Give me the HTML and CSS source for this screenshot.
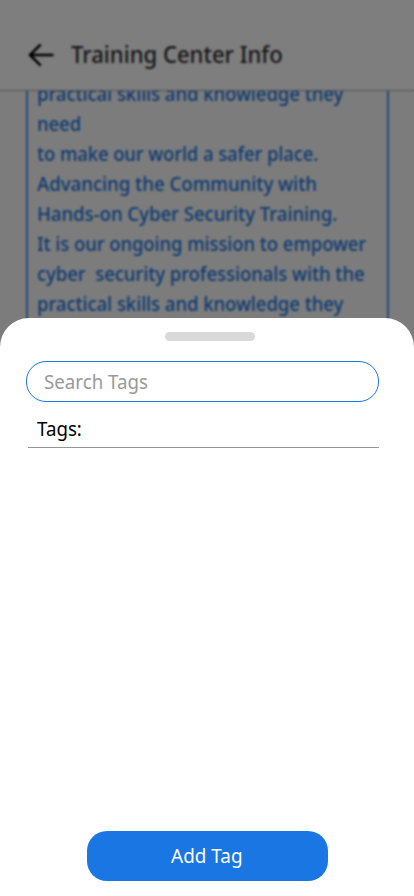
FILE: index.html
```html
<!DOCTYPE html>
<html lang="en">
<head>
<meta charset="utf-8">
<meta name="viewport" content="width=device-width">
<title>Training Center Info</title>
<link rel="stylesheet" href="styles.css">
</head>
<body>
<div class="screen">
  <div class="page">
    <header class="header">
      <svg class="back" viewBox="0 0 26 24" width="26" height="24"><path d="M24.500 12H2M12 2.200L2 12l10 9.800" fill="none" stroke="#000" stroke-width="2.500" stroke-linecap="round" stroke-linejoin="round"/></svg>
      <h1><span class="fit title">Training Center Info</span></h1>
    </header>
    <main class="content">
      <div class="info">
        <p><span class="fit l1">practical skills and knowledge they</span></p>
        <p><span class="fit l2">need</span></p>
        <p><span class="fit l3">to make our world a safer place.</span></p>
        <p><span class="fit l4">Advancing the Community with</span></p>
        <p><span class="fit l5">Hands-on Cyber Security Training.</span></p>
        <p><span class="fit l6">It is our ongoing mission to empower</span></p>
        <p><span class="fit l7">cyber&nbsp; security professionals with the</span></p>
        <p><span class="fit l1">practical skills and knowledge they</span></p>
      </div>
    </main>
  </div>
  <div class="scrim"></div>
  <section class="sheet">
    <div class="handle"></div>
    <div class="search"><span class="fit placeholder">Search Tags</span></div>
    <div class="tags"><span class="fit label">Tags:</span></div>
    <button class="add"><span class="fit action">Add Tag</span></button>
  </section>
</div>
</body>
</html>
```
FILE: styles.css
```css
* { box-sizing: border-box; }
body { margin: 0; font: 20px/30px "Noto Sans", sans-serif; background: #fff; }
.screen { position: relative; width: 414px; height: 896px; overflow: hidden; }
.page { height: 360px; overflow: hidden; background: #f9f9f9; display: flex; flex-direction: column; }
.header { height: 91px; flex: none; display: flex; align-items: flex-start; padding: 39px 28px 0; border-bottom: 1px solid #aaa; background: #fcfcfc; }
.back { margin-top: 4px; }
h1 { margin: 0 0 0 17px; font-size: 23.500px; line-height: 30px; font-weight: 500; color: #303030; }
.fit { display: inline-block; white-space: nowrap; transform-origin: left center; }
.title { transform: scaleX(.94); }
.l1 { transform: scaleX(.922); }
.l2 { transform: scaleX(.92); }
.l3 { transform: scaleX(.914); }
.l4 { transform: scaleX(.931); }
.l5 { transform: scaleX(.927); }
.l6 { transform: scaleX(.918); }
.l7 { transform: scaleX(.922); }
.placeholder, .label { transform: scaleX(.935); }
.action { transform: scaleX(.945); transform-origin: center; }
.content { flex: 1; overflow: hidden; padding: 0 25px 0 26px; }
.info { margin-top: -12px; height: 300px; border: solid #4a92ec; border-width: 0 2px; padding-left: 9px; color: #1976e2; font-weight: 500; }
.info p { margin: 0; height: 30px; }
.scrim { position: absolute; inset: 0; background: rgba(0, 0, 0, .5); backdrop-filter: blur(1px); }
.sheet { position: absolute; left: 0; right: 0; top: 318px; bottom: 0; background: #fff; border-radius: 29px 29px 0 0; padding: 14px 35px 15px 26px; display: flex; flex-direction: column; }
.handle { width: 90px; height: 9px; margin-left: 139px; border-radius: 5px; background: #d9d9d9; flex: none; }
.search { height: 41px; margin-top: 20px; border: 1px solid #1976e2; border-radius: 20px; padding: 5px 17px; color: #999; }
.tags { margin: 11px 0 0 2px; height: 35px; border-bottom: 1px solid #979797; padding: 1px 0 0 9px; color: #000; }
.add { margin: auto 0 0 61px; width: 241px; height: 50px; border: 0; border-radius: 20px; background: #1976e2; color: #fff; font: inherit; padding: 0 2px 1px 0; }
```
